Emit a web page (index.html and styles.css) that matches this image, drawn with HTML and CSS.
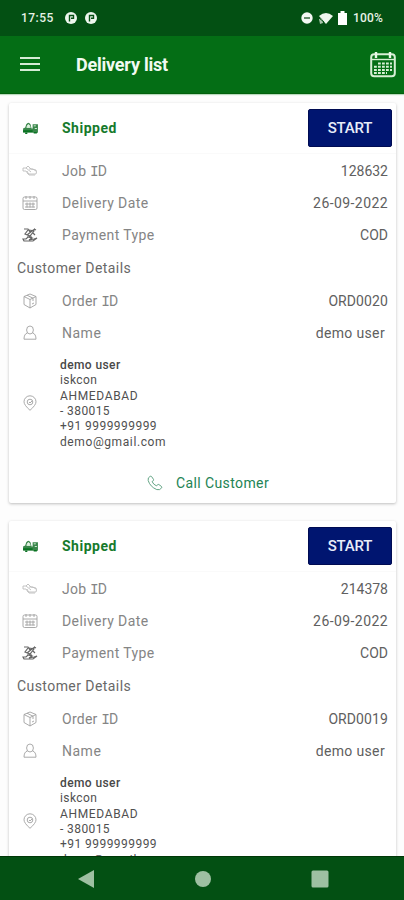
FILE: index.html
```
<!DOCTYPE html>
<html lang="en">
<head>
<meta charset="utf-8">
<title>Delivery list</title>
<link rel="stylesheet" href="styles.css">
</head>
<body>
<svg width="0" height="0" class="defs" aria-hidden="true">
  <symbol id="truck" viewBox="0 0 16 16"><path d="M1 11V8L3 7 4 4q2-3 4 0l1 4h1V4h5v8H1z" fill="#39864a"/><path d="M4.5 7 5.3 4.8q.8-1 1.6 0L7.8 7zM11 5.5h2M12 8h2" fill="#e4f3e5" stroke="#d8edd9"/><path d="M1 10.5h9M3 12.5h2M11 12h3" stroke="#087321" stroke-width="1.5"/></symbol>
  <symbol id="hand" viewBox="0 0 16 16"><path d="M4 5H1v3h3l2 3h8q1-2 0-4L9 6 6 3 4 5l5 4M7 6h4l3 2M5 8l2 4h6"/></symbol>
  <symbol id="date" viewBox="0 0 16 16"><rect x="1" y="2" width="14" height="12.5" rx="1.5"/><path d="M1 6h14M4 1v3M8 1v3M12 1v3M3 9h10M3 12h10M5 7.5v5M8 7.5v5M11 7.5v5"/></symbol>
  <symbol id="pay" viewBox="0 0 16 16"><path d="M2 2h4l2 3 5-3M6 3l-3 4 5 2 4-5-5-1M12 2l2 1M5 8l5-4M9 8l-2 2M11 6l2 2M1 12h3l2-2 4 1-3 2 5-1 3-1-4 3H2zM5 10h5"/></symbol>
  <symbol id="box" viewBox="0 0 16 16"><path d="M8 1 14 3.5v8L8 15l-6-3.5v-8zM2 3.5 8 6.5l6-3M8 6.5V15M5 2.2l6 3V8M10 11l2-1"/></symbol>
  <symbol id="user" viewBox="0 0 16 16"><path d="M5.3 8Q2 9 2 14.2h12Q14 9 10.7 8"/><ellipse cx="8" cy="5" rx="3.4" ry="4"/></symbol>
  <symbol id="pin" viewBox="0 0 16 16"><path d="M8 15.3Q2 10 2 6.8a6 6 0 0 1 12 0Q14 10 8 15.3z"/><circle cx="8" cy="7" r="2.8"/><path d="m7 7 1 1 2-2"/></symbol>
  <symbol id="phone" viewBox="0 0 16 16"><path d="M3.2 1.3Q.5 2.5 1.2 5.5q1.8 6.2 8.6 9.1 3.1.9 4.9-1.8.5-.8-.3-1.4l-2.6-1.9q-.8-.4-1.4.3l-.9 1.1Q6.3 9.5 5.1 6.6l1.2-.9q.6-.6.2-1.3L4.7 1.7q-.5-.8-1.5-.4z"/></symbol>
</svg>
<div class="screen">
  <header class="status">
    <span class="clock">17:55</span>
    <svg class="notice" viewBox="0 0 12 12"><circle cx="6" cy="6" r="6" fill="#eef7ee"/><path d="M4.5 9.5V3.5h4v2.7H6" fill="none" stroke="#075015" stroke-width="1.4"/></svg>
    <svg class="notice second" viewBox="0 0 12 12"><circle cx="6" cy="6" r="6" fill="#eef7ee"/><path d="M4.5 9.5V3.5h4v2.7H6" fill="none" stroke="#075015" stroke-width="1.4"/></svg>
    <span class="grow"></span>
    <svg class="dnd" viewBox="0 0 12 12"><circle cx="6" cy="6" r="5.7" fill="#f4f8f4"/><path d="M3 6h6" stroke="#37683f" stroke-width="1.5"/></svg>
    <svg class="wifi" viewBox="0 0 14 12"><path d="M0 4Q7-2 14 4L7 12z" fill="#eef7ee"/><path d="M0 7l3-1 1 5-3 1z" fill="#a9c5ac"/><path d="m0 6 5 4" stroke="#075015"/></svg>
    <svg class="battery" viewBox="0 0 9 14"><path d="M0 2h2.5V0h4v2H9v12H0z" fill="#fff"/></svg>
    <span class="percent">100%</span>
  </header>
  <nav class="appbar">
    <span class="menu"><i></i><i></i><i></i></span>
    <h1>Delivery list</h1>
    <svg class="calendar" viewBox="0 0 26 27"><rect x="1.2" y="3.2" width="23.6" height="22" rx="3" fill="none" stroke="#d8efd5" stroke-width="2"/><path d="M2 8.5h22" stroke="#d8efd5" stroke-width="1.4"/><path d="M6 1v6M20 1v6" stroke="#e8f7e6" stroke-width="2.4"/><path d="M8 12.5h14M4 15.7h18M4 18.9h18M4 22h13" stroke="#d8efd5" stroke-width="2" stroke-dasharray="2.8 1.2"/></svg>
  </nav>
  <main>
    <article class="card">
      <div class="head"><svg class="truck"><use href="#truck"/></svg><b>Shipped</b><button>START</button></div>
      <div class="row"><svg class="light"><use href="#hand"/></svg><span>Job <i class="cap">I</i>D</span><em class="num">128632</em></div>
      <div class="row"><svg><use href="#date"/></svg><span class="long">Delivery Date</span><em class="date">26-09-2022</em></div>
      <div class="row"><svg class="dark"><use href="#pay"/></svg><span class="long">Payment Type</span><em class="cod">COD</em></div>
      <h2>Customer Details</h2>
      <div class="row"><svg><use href="#box"/></svg><span>Order <i class="cap">I</i>D</span><em class="order">ORD0020</em></div>
      <div class="row"><svg><use href="#user"/></svg><span class="name">Name</span><em class="person">demo user</em></div>
      <div class="address"><svg><use href="#pin"/></svg><address><b>demo user</b><span>iskcon</span><span class="city">AHMEDABAD</span><span>- 380015</span><span class="tel">+91 9999999999</span><span class="mail">demo@gmail.com</span></address></div>
      <div class="call"><svg><use href="#phone"/></svg><span>Call Customer</span></div>
    </article>
    <article class="card">
      <div class="head"><svg class="truck"><use href="#truck"/></svg><b>Shipped</b><button>START</button></div>
      <div class="row"><svg class="light"><use href="#hand"/></svg><span>Job <i class="cap">I</i>D</span><em class="num">214378</em></div>
      <div class="row"><svg><use href="#date"/></svg><span class="long">Delivery Date</span><em class="date">26-09-2022</em></div>
      <div class="row"><svg class="dark"><use href="#pay"/></svg><span class="long">Payment Type</span><em class="cod">COD</em></div>
      <h2>Customer Details</h2>
      <div class="row"><svg><use href="#box"/></svg><span>Order <i class="cap">I</i>D</span><em class="order">ORD0019</em></div>
      <div class="row"><svg><use href="#user"/></svg><span class="name">Name</span><em class="person">demo user</em></div>
      <div class="address"><svg><use href="#pin"/></svg><address><b>demo user</b><span>iskcon</span><span class="city">AHMEDABAD</span><span>- 380015</span><span class="tel">+91 9999999999</span><span class="mail">demo@gmail.com</span></address></div>
    </article>
  </main>
  <footer>
    <svg viewBox="0 0 18 18"><path d="M1 9 17 0v18z"/></svg>
    <svg viewBox="0 0 18 18"><circle cx="9" cy="9" r="8"/></svg>
    <svg viewBox="0 0 18 18"><rect x=".5" y=".5" width="17" height="17" rx="1.5"/></svg>
  </footer>
</div>
</body>
</html>
```
FILE: styles.css
```
* { box-sizing: border-box; }
body { margin: 0; font-family: Roboto, sans-serif; background: #fdfdfd; overflow: hidden; }
.defs { display: block; height: 0; }
.screen { width: 404px; height: 900px; display: flex; flex-direction: column; }
.status { height: 36px; flex: none; background: #035013; color: #e7f2e7; display: flex; align-items: center; padding: 0 20px 0 21px; font-size: 12px; font-weight: 500; }
.clock { width: 44px; letter-spacing: .45px; }
.notice { width: 12px; height: 12px; }
.second { margin-left: 8px; }
.grow { flex: 1; }
.dnd { width: 12px; height: 12px; margin-right: 6px; }
.wifi { width: 14px; height: 12px; margin-right: 5px; }
.battery { width: 9px; height: 14px; margin-right: 6px; }
.percent { width: 31px; letter-spacing: .15px; white-space: nowrap; }
.appbar { height: 58px; flex: none; background: #046e15; display: flex; align-items: center; padding: 0 8px 0 20px; border-bottom: 1px solid #02600c; box-shadow: 0 1px 1px #b9d9bd; }
.menu { width: 20px; height: 14px; margin-top: -2px; display: flex; flex-direction: column; justify-content: space-between; }
.menu i { height: 2px; background: #d5ecd5; }
h1 { margin: 1px auto 0 36px; color: #f1faf1; font-size: 18px; font-weight: 700; letter-spacing: -.22px; line-height: 24px; }
.calendar { width: 26px; height: 27px; }
main { height: 762px; flex: none; padding: 9px 8px 0 9px; overflow: hidden; }
.card { width: 387px; height: 400px; margin-bottom: 18px; background: #fff; border-radius: 2px; box-shadow: 0 1px 3px rgba(0,0,0,.25); }
.head { height: 51px; display: flex; align-items: center; padding: 0 4px 0 13px; border-bottom: 1px solid #fafafa; }
.head b { margin-left: 23px; color: #167a2c; font-size: 14px; letter-spacing: .5px; }
button { margin-left: auto; width: 84px; height: 38px; padding: 0; border: 1px solid #000b52; border-radius: 2px; background: #001570; color: #e9edf9; font: 500 15px Roboto, sans-serif; letter-spacing: -.2px; }
svg { flex: none; }
.row svg, .address svg, .call svg, .truck { width: 16px; height: 16px; fill: none; stroke: #a0a0a0; stroke-width: .9; }
.head .truck { width: 17px; height: 17px; stroke: none; }
.row .light { stroke: #bdbdbd; }
.row .dark { stroke: #666; stroke-width: 1.2; }
.row { height: 31.6px; display: flex; align-items: center; padding: 0 8px 0 13px; color: #858585; font-size: 14px; letter-spacing: .25px; }
.head + .row { margin-top: 1.6px; }
.row span { margin-left: 24px; }
.row .long { letter-spacing: .4px; }
.row .name { letter-spacing: .5px; }
.cap { font: 14.5px "Liberation Mono", monospace; letter-spacing: -.9px; }
.row em { margin-left: auto; color: #606060; font-style: normal; }
.row .num { letter-spacing: 0; }
.row .date { letter-spacing: .42px; }
.row .cod { letter-spacing: 0; }
.row .order { letter-spacing: .1px; }
.row .person { margin-right: 3px; letter-spacing: .35px; }
h2 { height: 35px; line-height: 36px; margin: 0 0 0 8px; color: #686868; font-size: 14px; font-weight: 400; letter-spacing: .43px; }
.address { height: 109px; padding-left: 13px; display: flex; align-items: center; }
.address svg { margin-top: -1px; }
address { margin: 2px 0 0 22px; font-size: 12px; font-style: normal; line-height: 15.3px; color: #505050; letter-spacing: .4px; }
address b, address span { display: block; }
address b { color: #484848; font-weight: 500; letter-spacing: .4px; }
address .tel { letter-spacing: .45px; }
address .city { letter-spacing: .65px; }
address .mail { letter-spacing: .6px; }
.call { height: 47px; padding: 3px 0 0 11px; display: flex; align-items: center; justify-content: center; color: #238455; font-size: 14px; letter-spacing: .4px; }
.call svg { stroke: #549b78; margin-right: 13px; }
footer { height: 44px; flex: none; background: #035013; border-top: 1px solid #003707; display: flex; justify-content: center; gap: 99px; align-items: center; padding-left: 1px; }
footer svg { width: 18px; height: 18px; fill: #9ec0a2; }
```
